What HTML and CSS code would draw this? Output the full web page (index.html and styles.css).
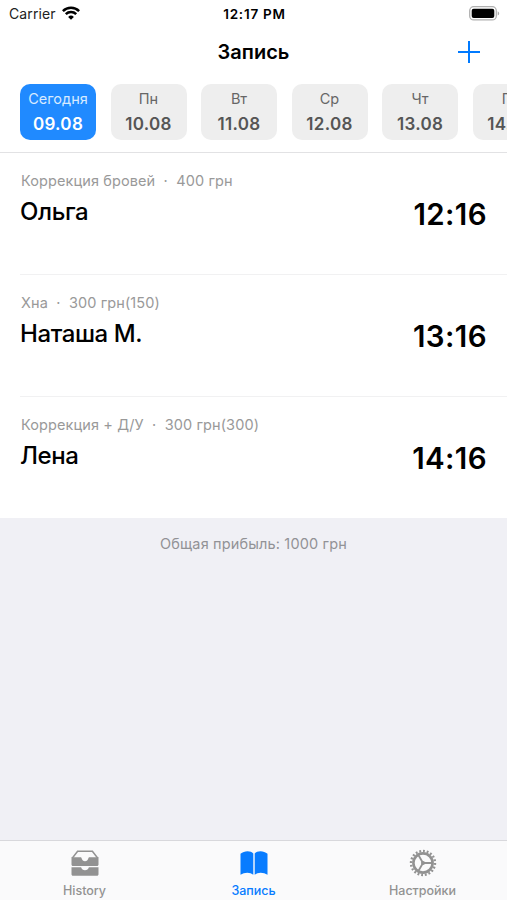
FILE: index.html
```
<!DOCTYPE html>
<html lang="ru">
<head>
  <meta charset="UTF-8">
  <title>Запись</title>
  <link rel="stylesheet" href="styles.css">
</head>
<body>
  <header class="header">
    <div class="status">
      <div class="carrier">
        <span class="carrier-name">Carrier</span>
        <svg width="18" height="14" viewBox="0 0 18 14">
          <g fill="none" stroke="#000" stroke-width="2.5">
            <path d="M.9 5.1a11.5 11.5 0 0 1 16.2 0"/>
            <path d="M3.8 8.2a7.4 7.4 0 0 1 10.4 0"/>
          </g>
          <path d="M9 13.8L6.1 10.9a4.1 4.1 0 0 1 5.8 0z"/>
        </svg>
      </div>
      <span class="clock">12:17 PM</span>
      <svg class="battery" width="31" height="15" viewBox="0 0 31 15">
        <rect x=".7" y=".7" width="26.6" height="13.2" rx="4" fill="#fff" stroke="#b0b0b0" stroke-width="1.3"/>
        <rect x="2.7" y="2.7" width="22.6" height="9.4" rx="2"/>
        <path d="M28.7 5.2c2 .8 2 3.6 0 4.4z" fill="#aaa"/>
      </svg>
    </div>
    <div class="navbar">
      <h1>Запись</h1>
      <svg class="add" width="22" height="22" viewBox="0 0 22 22">
        <path d="M11 0v22M0 11h22" stroke="#007aff" stroke-width="2"/>
      </svg>
    </div>
    <div class="days">
      <div class="day active"><span>Сегодня</span><b>09.08</b></div>
      <div class="day"><span>Пн</span><b>10.08</b></div>
      <div class="day"><span>Вт</span><b>11.08</b></div>
      <div class="day"><span>Ср</span><b>12.08</b></div>
      <div class="day"><span>Чт</span><b>13.08</b></div>
      <div class="day"><span>Пт</span><b>14.08</b></div>
    </div>
  </header>

  <ul class="list">
    <li class="row">
      <div>
        <p class="meta">Коррекция бровей &nbsp;·&nbsp; 400 грн</p>
        <p class="name">Ольга</p>
      </div>
      <span class="time">12:16</span>
    </li>
    <li class="row">
      <div>
        <p class="meta">Хна &nbsp;·&nbsp; 300 грн(150)</p>
        <p class="name">Наташа М.</p>
      </div>
      <span class="time">13:16</span>
    </li>
    <li class="row">
      <div>
        <p class="meta">Коррекция + Д/У &nbsp;·&nbsp; 300 грн(300)</p>
        <p class="name">Лена</p>
      </div>
      <span class="time">14:16</span>
    </li>
  </ul>

  <p class="total">Общая прибыль: 1000 грн</p>

  <nav class="tabs">
    <a class="tab">
      <svg width="28" height="28" viewBox="0 0 28 28">
        <path d="M1.2 9.3L6.600 2.200h14.800l5.400 7.100" fill="none" stroke="#929292" stroke-width="1.5"/>
        <path d="M.5 8.300h8.700c1 0 1.300.5 1.500 1.200.4 1.600 1.600 2.700 3.300 2.700s2.900-1.100 3.300-2.700c.2-.7.5-1.200 1.500-1.200h8.700v7.200c0 .9-.6 1.500-1.500 1.500H2c-.9 0-1.500-.6-1.500-1.500z"/>
        <path d="M.5 18.300h9.600c.5 1.800 2 3 3.900 3s3.400-1.200 3.900-3h9.600v7c0 .9-.6 1.500-1.500 1.500H2c-.9 0-1.500-.6-1.500-1.500z"/>
      </svg>
      <span>History</span>
    </a>
    <a class="tab active">
      <svg width="28" height="28" viewBox="0 0 28 28">
        <path d="M.5 4.800C2.500 3 5 2.200 7.500 2.200s4.500.8 5.800 2.300v21.300c-1.600-1.300-3.600-2-6-2-2.500 0-4.800.7-6.800 2z"/>
        <path d="M27.500 4.800c-2-1.800-4.500-2.600-7-2.600s-4.500.8-5.800 2.300v21.300c1.600-1.300 3.600-2 6-2 2.500 0 4.800.7 6.800 2z"/>
      </svg>
      <span>Запись</span>
    </a>
    <a class="tab">
      <svg width="28" height="28" viewBox="0 0 28 28">
        <g fill="none" stroke="#929292">
          <circle cx="14" cy="14" r="12" stroke-width="2.4" pathLength="80" stroke-dasharray="2 2"/>
          <circle cx="14" cy="14" r="9.6" stroke-width="2.6"/>
          <path d="M14 14h9M14 14L9.500 6.200M14 14L9.500 21.800" stroke-width="1.8"/>
        </g>
        <circle cx="14" cy="14" r="2"/>
      </svg>
      <span>Настройки</span>
    </a>
  </nav>
</body>
</html>
```
FILE: styles.css
```
* {
  box-sizing: border-box;
  margin: 0;
  padding: 0;
}
body {
  height: 900px;
  display: flex;
  flex-direction: column;
  overflow: hidden;
  background: #f0f0f5;
  color: #000;
  font-family: Inter, "Noto Sans", sans-serif;
}
svg {
  display: block;
}
.header {
  height: 153px;
  background: #fff;
  border-bottom: 1px solid #e2e2e4;
}
.status {
  display: grid;
  grid-template-columns: 1fr auto 1fr;
  align-items: center;
  height: 28px;
  padding: 0 7px 0 9px;
}
.carrier {
  display: flex;
  align-items: center;
  gap: 6px;
  margin-top: -1px;
  font-size: 14px;
  letter-spacing: 0.1px;
  color: #222;
}
.carrier svg {
  margin-top: -2px;
}
.clock {
  font-size: 13.5px;
  font-weight: 600;
  letter-spacing: 0.75px;
}
.battery {
  justify-self: end;
  margin-top: -2px;
}
.navbar {
  display: grid;
  grid-template-columns: 1fr auto 1fr;
  align-items: center;
  height: 48px;
  padding: 0 27px;
}
.navbar h1 {
  grid-column: 2;
  font-size: 20px;
  line-height: 24px;
  font-weight: 600;
}
.add {
  justify-self: end;
}
.days {
  display: flex;
  gap: 14.5px;
  padding: 8px 0 0 20px;
  overflow: hidden;
}
.day {
  flex: 0 0 76px;
  height: 56px;
  padding-top: 4px;
  border-radius: 10px;
  background: #eee;
  color: #666;
  text-align: center;
  font-size: 14.5px;
  line-height: 22px;
}
.day span, .day b {
  display: block;
}
.day b {
  margin-top: 3px;
  color: #555;
  font-size: 17px;
  font-weight: 600;
  letter-spacing: 0.3px;
}
.day.active {
  background: #208aff;
  color: #d8eaff;
}
.day.active b {
  color: #fff;
}
.list {
  list-style: none;
  background: #fff;
  padding-left: 20px;
}
.row {
  display: flex;
  justify-content: space-between;
  height: 122px;
  padding: 18px 20px 0 0;
  border-bottom: 1px solid #f1f1f2;
}
.row:last-child {
  height: 121px;
  border-bottom: none;
}
.meta {
  padding-left: 1px;
  font-size: 14.5px;
  line-height: 20px;
  letter-spacing: 0.1px;
  color: #999;
}
.name {
  margin-top: 6px;
  font-size: 24px;
  line-height: 30px;
  font-weight: 500;
  letter-spacing: -0.4px;
}
.time {
  margin-top: 25px;
  font-size: 29.5px;
  line-height: 36px;
  font-weight: 600;
  letter-spacing: 0.4px;
}
.total {
  margin-top: 16px;
  text-align: center;
  font-size: 14.5px;
  line-height: 20px;
  letter-spacing: 0.15px;
  color: #929296;
}
.tabs {
  display: grid;
  grid-template-columns: repeat(3, 1fr);
  height: 60px;
  margin-top: auto;
  background: #fafafb;
  border-top: 1px solid #d8d8dc;
}
.tab {
  display: flex;
  flex-direction: column;
  align-items: center;
  gap: 5px;
  padding-top: 8px;
  color: #929292;
  font-size: 12.5px;
  line-height: 18px;
  font-weight: 500;
}
.tab svg {
  fill: currentColor;
}
.tab.active {
  color: #087cff;
}
```
